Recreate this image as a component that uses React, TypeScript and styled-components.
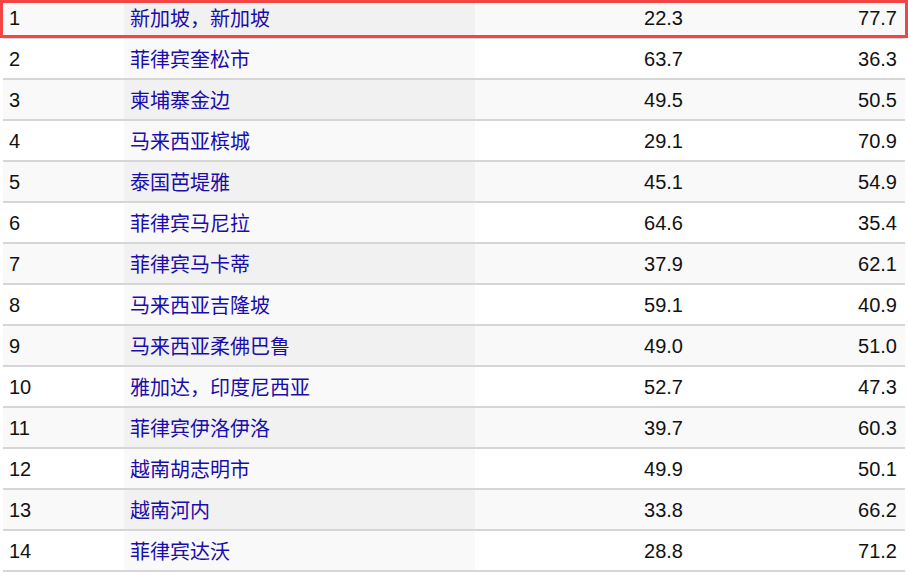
import React from "react";
import styled, {createGlobalStyle} from "styled-components";

interface ICity {
    rank: number;
    name: string;
    left: string;
    right: string;
}

const cities: ICity[] = [
    {rank: 1, name: "新加坡，新加坡", left: "22.3", right: "77.7"},
    {rank: 2, name: "菲律宾奎松市", left: "63.7", right: "36.3"},
    {rank: 3, name: "柬埔寨金边", left: "49.5", right: "50.5"},
    {rank: 4, name: "马来西亚槟城", left: "29.1", right: "70.9"},
    {rank: 5, name: "泰国芭堤雅", left: "45.1", right: "54.9"},
    {rank: 6, name: "菲律宾马尼拉", left: "64.6", right: "35.4"},
    {rank: 7, name: "菲律宾马卡蒂", left: "37.9", right: "62.1"},
    {rank: 8, name: "马来西亚吉隆坡", left: "59.1", right: "40.9"},
    {rank: 9, name: "马来西亚柔佛巴鲁", left: "49.0", right: "51.0"},
    {rank: 10, name: "雅加达，印度尼西亚", left: "52.7", right: "47.3"},
    {rank: 11, name: "菲律宾伊洛伊洛", left: "39.7", right: "60.3"},
    {rank: 12, name: "越南胡志明市", left: "49.9", right: "50.1"},
    {rank: 13, name: "越南河内", left: "33.8", right: "66.2"},
    {rank: 14, name: "菲律宾达沃", left: "28.8", right: "71.2"},
];

export default function App() {
    return (
        <>
            <GlobalStyle />
            <Page>
                <Highlight />
                <Table>
                    {cities.map((c) => (
                        <Row key={c.rank} $odd={c.rank % 2 === 1}>
                            <RankCell>{c.rank}</RankCell>
                            <NameCell $odd={c.rank % 2 === 1}>{c.name}</NameCell>
                            <NumCell $pad={7}>{c.left}</NumCell>
                            <NumCell $pad={8}>{c.right}</NumCell>
                        </Row>
                    ))}
                </Table>
            </Page>
        </>
    );
}

const GlobalStyle = createGlobalStyle`
  html, body {
    margin: 0;
    padding: 0;
    background: #fff;
    overflow: hidden;
  }
  body {
    font-family: "Liberation Sans", Arial, "Noto Sans CJK SC", sans-serif;
  }
`;

const Page = styled.div`
  position: relative;
  width: 908px;
  height: 574px;
  overflow: hidden;
  padding-left: 3px;
  box-sizing: border-box;
`;

// red box drawn over the first row
const Highlight = styled.div`
  position: absolute;
  left: 0;
  top: 0;
  width: 908px;
  height: 38px;
  box-sizing: border-box;
  border: 3px solid #f44545;
  z-index: 2;
`;

const Table = styled.div`
  display: flex;
  flex-direction: column;
  width: 902px;
  margin-top: -2px;
`;

const Row = styled.div<{ $odd: boolean }>`
  display: grid;
  grid-template-columns: 121px 351px 215px 215px;
  height: 41px;
  box-sizing: border-box;
  border-bottom: 2px solid #d6d6d6;
  background: ${(p) => (p.$odd ? "#f9f9f9" : "#ffffff")};
  font-size: 20px;
  color: #111;
`;

const RankCell = styled.div`
  display: flex;
  align-items: center;
  padding: 2px 0 0 6px;
`;

const NameCell = styled.div<{ $odd: boolean }>`
  display: flex;
  align-items: center;
  padding-left: 6px;
  background: ${(p) => (p.$odd ? "#f1f1f1" : "#f9f9f9")};
  color: #1a0dab;
  font-family: "Noto Sans CJK SC", "Liberation Sans", sans-serif;
`;

const NumCell = styled.div<{ $pad: number }>`
  display: flex;
  align-items: center;
  justify-content: flex-end;
  padding-top: 2px;
  padding-right: ${(p) => p.$pad}px;
`;
